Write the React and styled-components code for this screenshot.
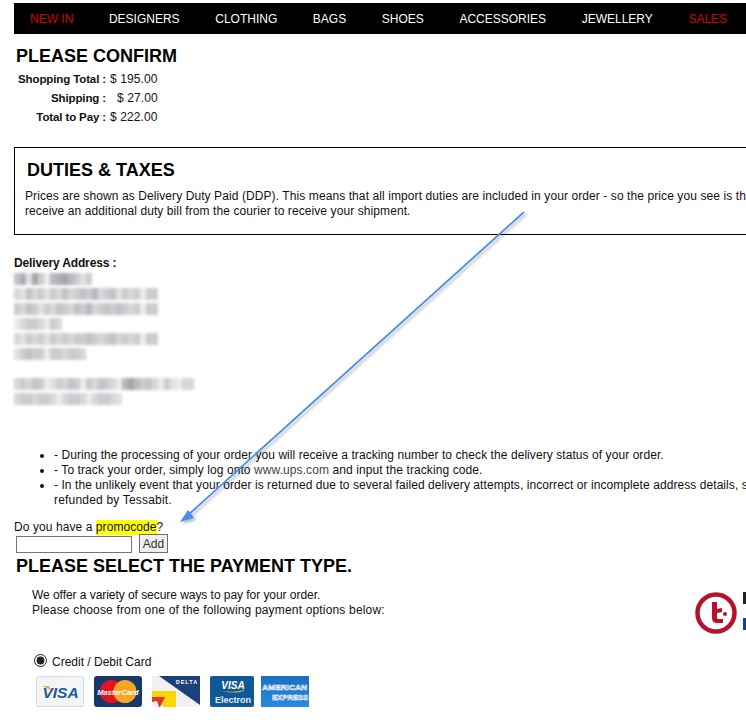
import React from 'react';
import styled, { createGlobalStyle } from 'styled-components';

const GlobalStyle = createGlobalStyle`
  html, body {
    margin: 0;
    padding: 0;
    height: 720px;
    overflow: hidden;
    background: #fff;
  }
  body {
    font-family: "Liberation Sans", Arial, sans-serif;
    font-size: 12px;
    color: #111;
  }
`;

const Page = styled.div`
  position: relative;
  width: 1000px;
  height: 720px;
  padding: 3px 0 0 14px;
  box-sizing: border-box;
`;

const Nav = styled.nav`
  display: flex;
  gap: 35.6px;
  align-items: center;
  height: 31px;
  padding-left: 16px;
  background: #000;
`;

const NavItem = styled.a`
  color: ${(props) => (props.$sale ? '#d40000' : '#fff')};
  font-size: 12px;
  text-decoration: none;
`;

const Title = styled.h1`
  margin: ${(props) => props.$margin || '0'};
  font-size: 18px;
  line-height: 20px;
  font-weight: bold;
  color: #000;
  white-space: nowrap;
`;

const Totals = styled.div`
  display: grid;
  grid-template-columns: 92px auto;
  column-gap: 4px;
  justify-content: start;
  margin-top: 4px;
`;

const TotalLabel = styled.div`
  font-size: 11.5px;
  font-weight: bold;
  letter-spacing: -0.12px;
  text-align: right;
  line-height: 19px;
  white-space: nowrap;
`;

const TotalValue = styled.div`
  line-height: 19px;
  letter-spacing: 0.1px;
  padding-left: ${(props) => (props.$indent ? '7px' : '0')};
`;

const DutiesBox = styled.section`
  margin-top: 20px;
  height: 88px;
  box-sizing: border-box;
  padding: 12px 0 0 12px;
  border: 1px solid #000;
`;

const DutiesText = styled.p`
  margin: 9px 0 0 -2px;
  line-height: 15px;
  letter-spacing: 0.09px;
  white-space: nowrap;
`;

const AddressLabel = styled.div`
  margin-top: 21px;
  font-weight: bold;
  line-height: 15px;
  letter-spacing: -0.15px;
`;

const AddressBlock = styled.div`
  display: flex;
  flex-direction: column;
  gap: 3px;
  margin-top: 2px;
  filter: blur(1.4px);
`;

const AddressLine = styled.div`
  display: flex;
  height: 12px;
  margin-top: ${(props) => props.$top || '0'};
`;

const Mosaic = styled.span`
  display: block;
  width: 6px;
  height: 100%;
  background: #9a9aa2;
`;

const Notes = styled.ul`
  margin: 43px 0 0;
  padding: 0 0 0 40px;
  line-height: 15px;
  white-space: nowrap;
`;

const Spaced = styled.span`
  letter-spacing: ${(props) => props.$ls}px;
`;

const UpsLink = styled.a`
  color: #444;
  text-decoration: none;
`;

const PromoLine = styled.div`
  margin-top: 12px;
  line-height: 15px;
  letter-spacing: 0.08px;
`;

const Mark = styled.span`
  display: inline-block;
  background: #ff0;
`;

const PromoForm = styled.div`
  display: flex;
  align-items: flex-end;
  gap: 7px;
  margin: -1px 0 0 2px;
`;

const PromoInput = styled.input`
  width: 116px;
  height: 17px;
  box-sizing: border-box;
  margin: 0;
  padding: 0 2px;
  border: 1px solid #767676;
  background: #fff;
`;

const AddButton = styled.button`
  width: 29px;
  height: 19px;
  box-sizing: border-box;
  margin: 0;
  padding: 0;
  border: 1px solid #707070;
  background: #efefef;
  color: #333;
  font: 12px "Liberation Sans", Arial, sans-serif;
`;

const IntroRow = styled.div`
  display: flex;
  align-items: flex-start;
  margin: 12px 0 0 18px;
`;

const Intro = styled.p`
  width: 663px;
  flex: none;
  margin: 0;
  line-height: 15px;
`;

const Brand = styled.svg`
  display: block;
  flex: none;
  margin-top: 1px;
`;

const RadioRow = styled.label`
  display: flex;
  align-items: center;
  gap: 5px;
  margin: 17px 0 0 20px;
  line-height: 15px;
`;

const Radio = styled.input`
  width: 13px;
  height: 13px;
  margin: 0 0 3px;
  accent-color: #222;
`;

const Cards = styled.div`
  display: flex;
  margin: 6px 0 0 22px;
`;

const Card = styled.svg`
  display: block;
  flex: none;
  margin-right: ${(props) => props.$gap}px;
`;

const Arrow = styled.svg`
  position: absolute;
  left: 0;
  top: 0;
  pointer-events: none;
`;

const navItems = ['NEW IN', 'DESIGNERS', 'CLOTHING', 'BAGS', 'SHOES', 'ACCESSORIES', 'JEWELLERY', 'SALES'];

const addressLines = [
  [13, '0.6 0.8 0.3 0.9 0.5 0.2 0.7 0.8 0.9 0.7 0.5 0.3 0.5'],
  [24, '0.4 0.3 0.6 0.4 0.5 0.3 0.5 0.4 0.6 0.4 0.5 0.6 0.5 0.7 0.4 0.5 0.6 0.3 0.5 0.4 0.5 0.2 0.5 0.5'],
  [24, '0.5 0.4 0.6 0.5 0.3 0.5 0.4 0.6 0.5 0.4 0.6 0.5 0.7 0.4 0.5 0.6 0.5 0.6 0.5 0.4 0.5 0.2 0.5 0.5'],
  [8, '0.2 0.4 0.5 0.5 0.4 0.2 0.5 0.4'],
  [24, '0.4 0.3 0.5 0.4 0.5 0.3 0.5 0.4 0.5 0.4 0.5 0.5 0.6 0.5 0.4 0.5 0.6 0.4 0.5 0.4 0.5 0.2 0.5 0.5'],
  [12, '0.3 0.5 0.6 0.5 0.5 0.2 0.5 0.5 0.4 0.5 0.5 0.4'],
  [30, '0.4 0.5 0.4 0.6 0.5 0.2 0.3 0.5 0.4 0.6 0.5 0.2 0.5 0.4 0.6 0.5 0.4 0.2 0.7 0.9 0.7 0.5 0.6 0.4 0.2 0.5 0.3 0.2 0.4 0.4', '15px'],
  [18, '0.4 0.5 0.5 0.4 0.5 0.5 0.4 0.2 0.4 0.5 0.5 0.4 0.2 0.4 0.5 0.5 0.4 0.3'],
];

const VisaCard = () => (
  <Card $gap={10} width="48" height="31" viewBox="0 0 48 31">
    <rect x="0.5" y="0.5" width="47" height="30" rx="1.5" fill="#f4f5f6" stroke="#dcdcdc" />
    <path d="M6 10 L13 10 L15 14 Z" fill="#e9a93a" />
    <text x="24.5" y="21.5" textAnchor="middle" fontFamily="Liberation Sans" fontSize="15.5" fontWeight="bold" fontStyle="italic" fill="#1d5a96">VISA</text>
  </Card>
);

const MasterCard = () => (
  <Card $gap={10} width="48" height="31" viewBox="0 0 48 31">
    <rect width="48" height="31" rx="3" fill="#16386c" />
    <circle cx="17.5" cy="15.5" r="11.5" fill="#e8111d" />
    <circle cx="31" cy="15.5" r="11.5" fill="#f6a623" />
    <text x="24" y="18.5" textAnchor="middle" fontFamily="Liberation Sans" fontSize="7.5" fontWeight="bold" fontStyle="italic" fill="#fff">MasterCard</text>
  </Card>
);

const DeltaCard = () => (
  <Card $gap={10} width="48" height="31" viewBox="0 0 48 31">
    <rect width="48" height="31" fill="#f1f1f3" />
    <path d="M7 0 L48 0 L48 29 Z" fill="#1d3f7c" />
    <path d="M0 15 L24 15 L24 31 L12 31 L0 21 Z" fill="#f6d80d" />
    <path d="M0 21 L13 21 L8 31 L0 31 Z" fill="#e4352b" />
    <path d="M0 26 L5 25 L7 31 L0 31 Z" fill="#f1f1f3" />
    <text x="35" y="8" textAnchor="middle" fontFamily="Liberation Sans" fontSize="5.5" fontWeight="bold" letterSpacing="1" fill="#fff">DELTA</text>
  </Card>
);

const ElectronCard = () => (
  <Card $gap={7} width="44" height="31" viewBox="0 0 44 31">
    <rect width="44" height="31" rx="2" fill="#0f5a96" />
    <text x="23" y="13" textAnchor="middle" fontFamily="Liberation Sans" fontSize="10" fontWeight="bold" fontStyle="italic" fill="#fff">VISA</text>
    <path d="M13 15 Q24 17 34 14 L34 15 Q24 18 13 15 Z" fill="#e9b23c" />
    <text x="23" y="26.5" textAnchor="middle" fontFamily="Liberation Sans" fontSize="9" fontWeight="bold" fill="#e6edf4">Electron</text>
  </Card>
);

const AmexCard = () => (
  <Card $gap={0} width="48" height="31" viewBox="0 0 48 31">
    <defs>
      <linearGradient id="amex" x1="0" y1="0" x2="0" y2="1">
        <stop offset="0" stopColor="#1b6fc0" />
        <stop offset="1" stopColor="#2a8ae0" />
      </linearGradient>
    </defs>
    <rect width="48" height="31" fill="url(#amex)" />
    <text x="1" y="14" fontFamily="Liberation Sans" fontSize="8" fontWeight="bold" fill="#1b6fc0" stroke="#fff" strokeWidth="0.6" textLength="45" lengthAdjust="spacingAndGlyphs">AMERICAN</text>
    <text x="11" y="24" fontFamily="Liberation Sans" fontSize="8" fontWeight="bold" fill="#1b6fc0" stroke="#fff" strokeWidth="0.6" textLength="36" lengthAdjust="spacingAndGlyphs">EXPRESS</text>
  </Card>
);

const App = () => (
  <>
    <GlobalStyle />
    <Page>
      <Nav>
        {navItems.map((item) => (
          <NavItem key={item} $sale={item === 'NEW IN' || item === 'SALES'}>{item}</NavItem>
        ))}
      </Nav>

      <Title $margin="12px 0 0 2px">PLEASE CONFIRM</Title>
      <Totals>
        <TotalLabel>Shopping Total :</TotalLabel>
        <TotalValue>$ 195.00</TotalValue>
        <TotalLabel>Shipping :</TotalLabel>
        <TotalValue $indent>$ 27.00</TotalValue>
        <TotalLabel>Total to Pay :</TotalLabel>
        <TotalValue>$ 222.00</TotalValue>
      </Totals>

      <DutiesBox>
        <Title>DUTIES &amp; TAXES</Title>
        <DutiesText>
          Prices are shown as Delivery Duty Paid (DDP). This means that all import duties are included in your order - so the price you see is the final price and you will not
          <br />
          receive an additional duty bill from the courier to receive your shipment.
        </DutiesText>
      </DutiesBox>

      <AddressLabel>Delivery Address :</AddressLabel>
      <AddressBlock aria-hidden="true">
        {addressLines.map(([count, shades, top], i) => (
          <AddressLine key={i} $top={top}>
            {shades.split(' ').slice(0, count).map((shade, j) => (
              <Mosaic key={j} style={{ opacity: Number(shade) }} />
            ))}
          </AddressLine>
        ))}
      </AddressBlock>

      <Notes>
        <li><Spaced $ls={0.07}>- During the processing of your order you will receive a tracking number to check the delivery status of your order.</Spaced></li>
        <li><Spaced $ls={0.09}>- To track your order, simply log onto <UpsLink>www.ups.com</UpsLink> and input the tracking code.</Spaced></li>
        <li>
          <Spaced $ls={0.07}>- In the unlikely event that your order is returned due to several failed delivery attempts, incorrect or incomplete address details, shipping costs will not be</Spaced>
          <br />
          <Spaced $ls={0.19}>refunded by Tessabit.</Spaced>
        </li>
      </Notes>

      <PromoLine>Do you have a <Mark>promocode</Mark>?</PromoLine>
      <PromoForm>
        <PromoInput type="text" />
        <AddButton type="button">Add</AddButton>
      </PromoForm>

      <Title $margin="3px 0 0 2px">PLEASE SELECT THE PAYMENT TYPE.</Title>

      <IntroRow>
        <Intro>
          <Spaced $ls={-0.05}>We offer a variety of secure ways to pay for your order.</Spaced>
          <br />
          <Spaced $ls={0.17}>Please choose from one of the following payment options below:</Spaced>
        </Intro>
        <Brand width="60" height="48" viewBox="0 0 60 48">
          <circle cx="21" cy="24" r="18.5" fill="none" stroke="#b5122b" strokeWidth="4.5" />
          <path d="M17 13 L17 29 Q17 34 22 34 L28 34 L28 30 L23 30 Q22 30 22 28 L22 24 L27 23 L27 19 L22 20 L22 13 Z" fill="#b5122b" />
          <circle cx="30" cy="25" r="2" fill="#b5122b" />
          <rect x="48" y="3" width="4" height="12" fill="#222" />
          <rect x="48" y="29" width="4" height="12" fill="#1b3f8f" />
        </Brand>
      </IntroRow>

      <RadioRow>
        <Radio type="radio" name="payment" defaultChecked />
        Credit / Debit Card
      </RadioRow>

      <Cards>
        <VisaCard />
        <MasterCard />
        <DeltaCard />
        <ElectronCard />
        <AmexCard />
      </Cards>

      <Arrow width="746" height="720" viewBox="0 0 746 720">
        <defs>
          <filter id="arrowShadow" x="-10%" y="-10%" width="120%" height="120%">
            <feDropShadow dx="2" dy="2" stdDeviation="1.5" floodColor="#000" floodOpacity="0.3" />
          </filter>
        </defs>
        <g filter="url(#arrowShadow)">
          <path d="M524 212 L187 516" stroke="#4a90e2" strokeWidth="1.8" fill="none" />
          <path d="M180 522 L188 510 L194 518 Z" fill="#4a90e2" />
        </g>
      </Arrow>
    </Page>
  </>
);

export default App;
